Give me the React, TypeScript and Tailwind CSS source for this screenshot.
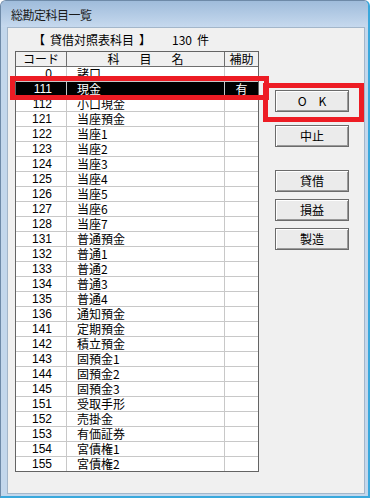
import React from "react";

const rows: Array<{ code: string; name: string; sub?: string }> = [
  { code: "0", name: "諸口" },
  { code: "111", name: "現金", sub: "有" },
  { code: "112", name: "小口現金" },
  { code: "121", name: "当座預金" },
  { code: "122", name: "当座1" },
  { code: "123", name: "当座2" },
  { code: "124", name: "当座3" },
  { code: "125", name: "当座4" },
  { code: "126", name: "当座5" },
  { code: "127", name: "当座6" },
  { code: "128", name: "当座7" },
  { code: "131", name: "普通預金" },
  { code: "132", name: "普通1" },
  { code: "133", name: "普通2" },
  { code: "134", name: "普通3" },
  { code: "135", name: "普通4" },
  { code: "136", name: "通知預金" },
  { code: "141", name: "定期預金" },
  { code: "142", name: "積立預金" },
  { code: "143", name: "固預金1" },
  { code: "144", name: "固預金2" },
  { code: "145", name: "固預金3" },
  { code: "151", name: "受取手形" },
  { code: "152", name: "売掛金" },
  { code: "153", name: "有価証券" },
  { code: "154", name: "宮債権1" },
  { code: "155", name: "宮債権2" },
];

const SELECTED = "111";

function WinButton({ label, className }: { label: string; className?: string }) {
  return (
    <button
      type="button"
      className={
        "flex h-[22px] w-[74px] items-center justify-center border border-[#6b6b6b] bg-[#ebebeb] text-[12px] leading-none text-black shadow-[inset_1px_1px_0_#ffffff,inset_-1px_-1px_0_#9a9a9a] " +
        (className ?? "")
      }
    >
      {label}
    </button>
  );
}

export default function App() {
  return (
    <div
      className="relative flex h-[498px] w-[370px] flex-col overflow-hidden rounded-t-[6px] border-l border-t border-l-[#6e8aa8] border-t-[#6e8aa8] border-r-2 border-b-2 border-r-[#3aa8dc] border-b-[#3aa8dc] bg-[#c3d7ec] text-black"
      style={{ fontFamily: '"MS UI Gothic", "Noto Sans CJK JP", sans-serif' }}
    >
      {/* title bar */}
      <div className="flex h-[26px] shrink-0 items-center bg-gradient-to-b from-[#9fbcdb] to-[#c6d9ee] pl-[10px] pt-[2px] text-[12px] tracking-[-0.5px] text-[#1a1a1a]">
        総勘定科目一覧
      </div>

      {/* client area */}
      <div className="flex min-h-0 flex-1 pl-[6px] pr-[3px] pb-[2px]">
        <div className="flex flex-1 border border-[#a3b6ca] bg-[#f0f0f0]">
          <div className="flex flex-col pl-[7px] pt-[5px]">
            <div className="mb-[4px] flex h-[14px] items-center text-[12px] leading-[14px]">
              <span className="ml-[18px]">【</span>
              <span className="ml-[5px]">貸借対照表科目</span>
              <span className="ml-[5px]">】</span>
              <span className="ml-[21px]">130</span>
              <span className="ml-[5px]">件</span>
            </div>

            <div className="w-[244px] border border-[#646464] bg-white text-[12px] leading-[14px]">
              <div className="grid h-[15px] grid-cols-[51px_158px_33px] border-b border-[#6e6e6e] bg-[#f0f0f0]">
                <div className="flex items-center justify-center border-r border-[#6e6e6e]">コード</div>
                <div className="flex items-center justify-center gap-[20px] border-r border-[#6e6e6e]">
                  <span>科</span>
                  <span>目</span>
                  <span>名</span>
                </div>
                <div className="flex items-center justify-center">補助</div>
              </div>
              {rows.map((r, i) => {
                const sel = r.code === SELECTED;
                return (
                  <div
                    key={r.code}
                    className={
                      "grid grid-cols-[51px_158px_33px] " +
                      (i < rows.length - 1 ? "h-[15px] border-b border-[#c8c8c8] " : "h-[14px] ") +
                      (sel ? "bg-black text-white" : "")
                    }
                  >
                    <div className="flex items-center justify-end border-r border-[#c8c8c8] pr-[14px] font-['Liberation_Sans',sans-serif]">
                      {r.code}
                    </div>
                    <div className="flex items-center border-r border-[#c8c8c8] pl-[10px]">{r.name}</div>
                    <div className="flex items-center justify-center">{r.sub ?? ""}</div>
                  </div>
                );
              })}
            </div>
          </div>

          <div className="ml-[16px] flex flex-col pt-[62px]">
            <WinButton label="O　K" />
            <WinButton label="中止" className="mt-[13px]" />
            <WinButton label="貸借" className="mt-[23px]" />
            <WinButton label="損益" className="mt-[7px]" />
            <WinButton label="製造" className="mt-[7px]" />
          </div>
        </div>
      </div>

      {/* annotation boxes */}
      <div className="pointer-events-none absolute left-[9px] top-[75px] h-[24px] w-[259px] border-[5px] border-[#ed1c24]" />
      <div className="pointer-events-none absolute left-[262px] top-[82px] h-[39px] w-[101px] border-[5px] border-[#ed1c24]" />
    </div>
  );
}
